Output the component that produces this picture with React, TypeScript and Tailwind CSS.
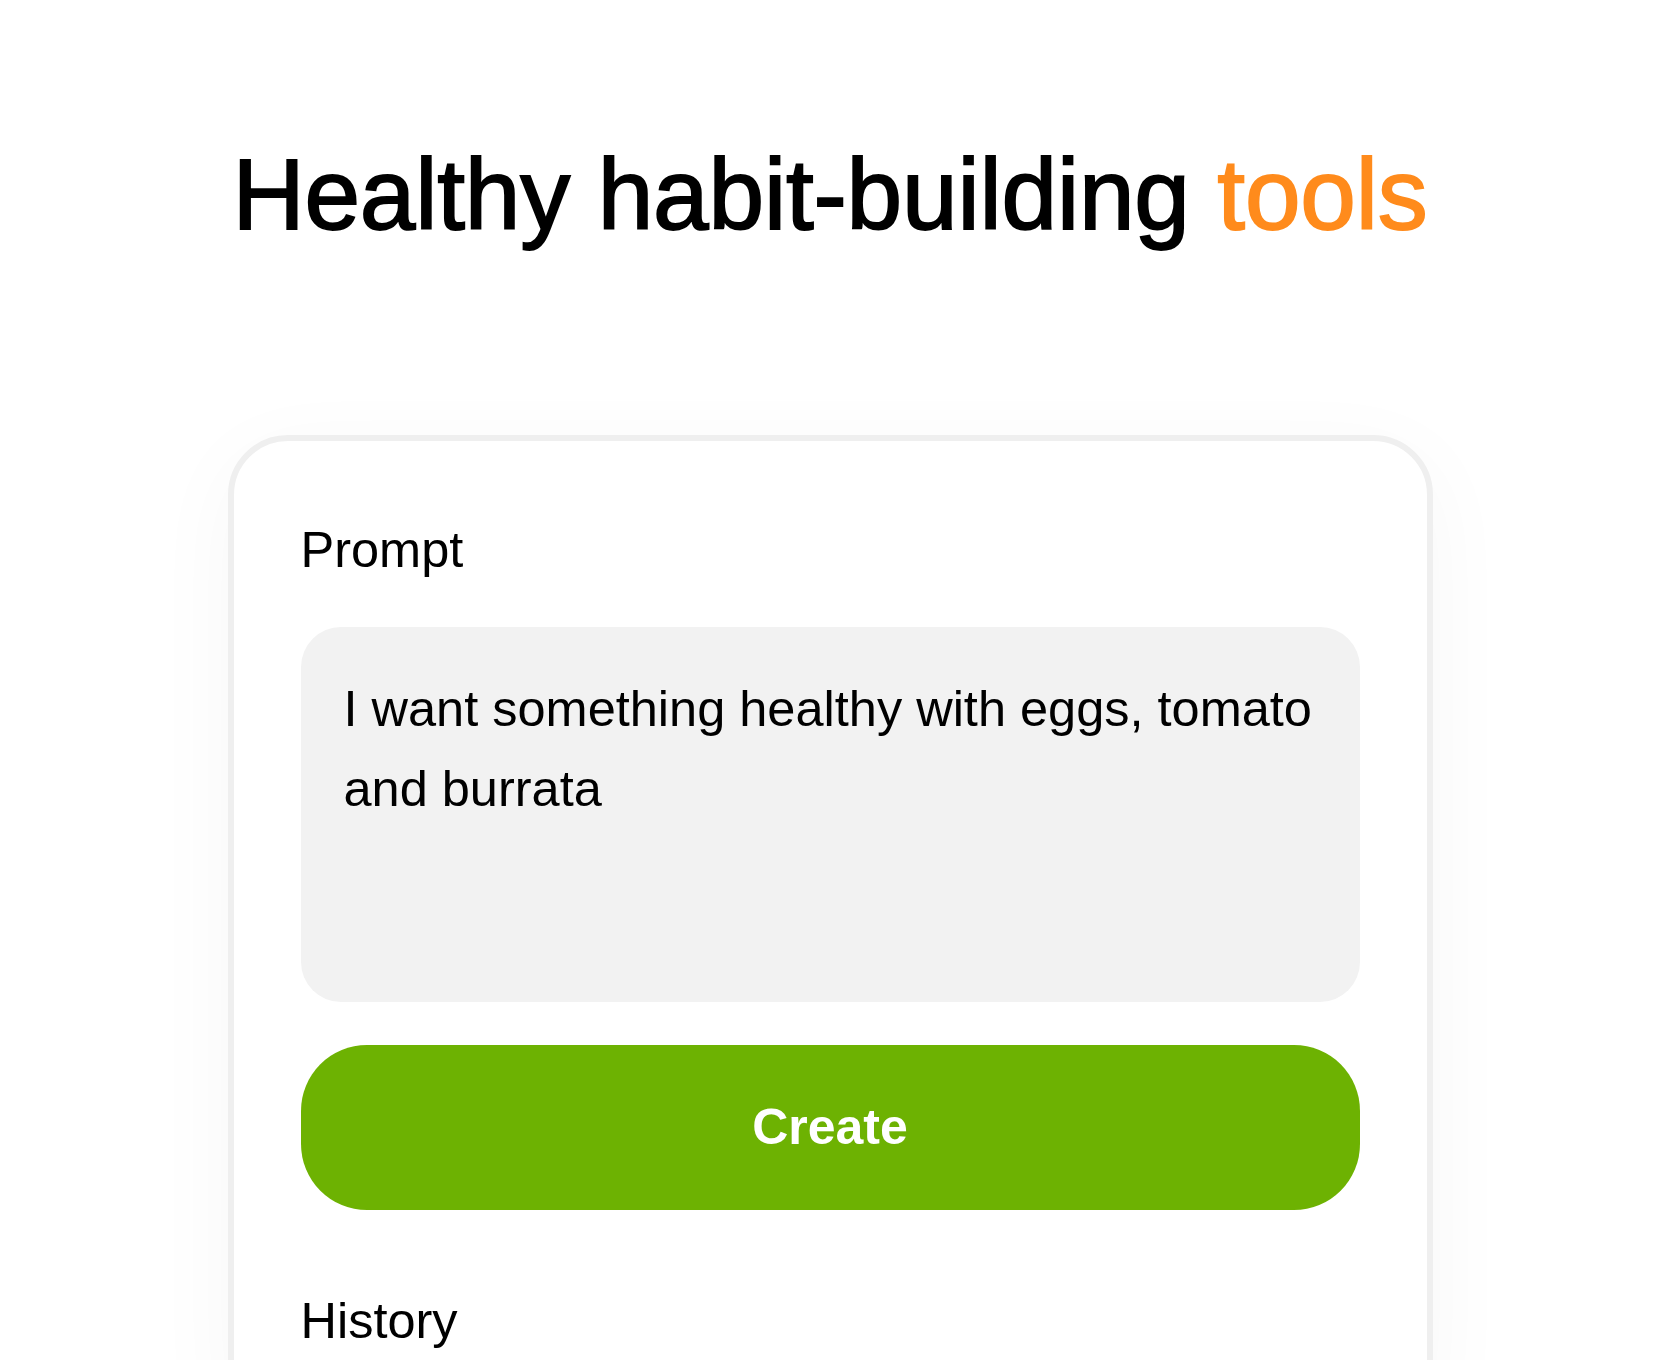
import { useState } from "react";

const font = "font-['Liberation_Sans',Arial,sans-serif]";

function PromptCard() {
  const [prompt, setPrompt] = useState("I want something healthy with eggs, tomato and burrata");

  return (
    <div className="w-[1205px] rounded-[60px] border-[6px] border-[#efefef] bg-white px-[67px] pt-[71px] pb-[60px] shadow-[0_20px_90px_rgba(0,0,0,0.035)]">
      <label htmlFor="prompt" className="block text-[50.5px] leading-[75px] text-black">
        Prompt
      </label>
      <textarea
        id="prompt"
        value={prompt}
        onChange={(e) => setPrompt(e.target.value)}
        className={`mt-[40px] block h-[375px] w-full resize-none rounded-[40px] bg-[#f2f2f2] pt-[42px] pl-[43px] pr-[24px] text-[50.5px] leading-[80px] text-black outline-none ${font}`}
      />
      <button className="mt-[43px] flex h-[165px] w-full items-center justify-center rounded-[66px] bg-[#6db202] text-[50px] font-bold text-white">
        Create
      </button>
      <h2 className="mt-[73px] text-[50.5px] leading-[75px] text-black">History</h2>
    </div>
  );
}

export default function App() {
  return (
    <div className={`min-h-screen bg-white pr-[4px] ${font}`}>
      <div className="flex flex-col items-center pt-[134px]">
        <h1 className="text-[100px] leading-[120px] tracking-[-0.002em] text-black [-webkit-text-stroke:1.8px]">
          Healthy habit-building <span className="text-[#ff8b1c]">tools</span>
        </h1>
        <div className="mt-[181px]">
          <PromptCard />
        </div>
      </div>
    </div>
  );
}
